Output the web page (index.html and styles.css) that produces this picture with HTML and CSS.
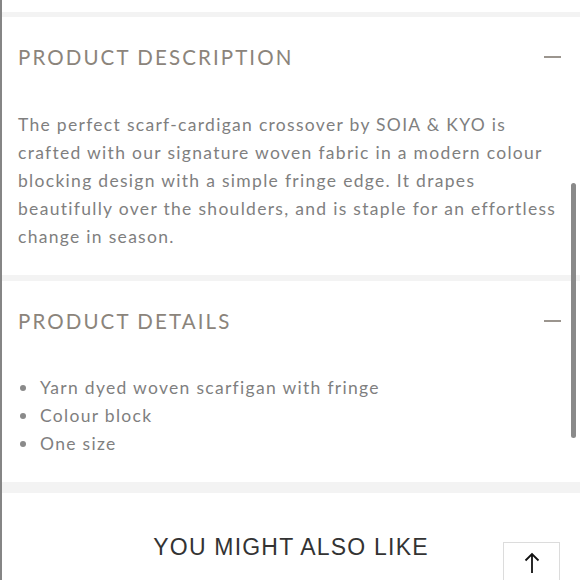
FILE: index.html
```html
<!DOCTYPE html>
<html lang="en">
<head>
<meta charset="utf-8">
<title>Product</title>
<link rel="stylesheet" href="styles.css">
</head>
<body>
<div class="page">
  <div class="band band-thin"></div>
  <section class="acc">
    <div class="acc-head">
      <h2 class="acc-title">PRODUCT DESCRIPTION</h2>
      <span class="minus"></span>
    </div>
    <p class="acc-body">The perfect scarf-cardigan crossover by SOIA &amp; KYO is crafted with our signature woven fabric in a modern colour blocking design with a simple fringe edge. It drapes beautifully over the shoulders, and is staple for an effortless change in season.</p>
  </section>
  <div class="band band-mid"></div>
  <section class="acc">
    <div class="acc-head">
      <h2 class="acc-title">PRODUCT DETAILS</h2>
      <span class="minus"></span>
    </div>
    <ul class="acc-list">
      <li>Yarn dyed woven scarfigan with fringe</li>
      <li>Colour block</li>
      <li>One size</li>
    </ul>
  </section>
  <div class="band band-thick"></div>
  <h3 class="also">YOU MIGHT ALSO LIKE</h3>
  <div class="scrollbar"></div>
  <button class="to-top" aria-label="Back to top">
    <svg width="16" height="22" viewBox="0 0 16 22"><path d="M8 21V2M1.5 8.5L8 2l6.5 6.5" fill="none" stroke="#111" stroke-width="1.8"/></svg>
  </button>
</div>
</body>
</html>
```
FILE: styles.css
```css
html, body {
  margin: 0;
  padding: 0;
  background: #fff;
}
body {
  height: 580px;
  overflow: hidden;
}
.page {
  position: relative;
  height: 580px;
  padding-top: 12px;
  border-left: 2px solid #858585;
  box-sizing: border-box;
  font-family: "Lato", "Liberation Sans", sans-serif;
}
.band {
  background: #f3f3f3;
}
.band-thin {
  height: 5px;
}
.band-mid {
  height: 6px;
}
.band-thick {
  height: 11px;
}
.acc {
  padding: 28px 20px 24px 16px;
}
.acc-head {
  display: flex;
  align-items: center;
  justify-content: space-between;
  height: 24px;
}
.acc-title {
  margin: 0;
  font-size: 20.5px;
  font-weight: 400;
  line-height: 24px;
  letter-spacing: 2.1px;
  color: #8b847b;
}
.minus {
  width: 17px;
  height: 2px;
  background: #9b958e;
  margin-right: -1px;
  margin-top: -1px;
}
.acc-body {
  margin: 42px 0 0 0;
  font-size: 17.5px;
  line-height: 28px;
  letter-spacing: 1.3px;
  color: #7f7f7f;
}
.acc-list {
  margin: 41px 0 0 0;
  padding: 0;
  list-style: none;
  font-size: 17.5px;
  line-height: 28px;
  letter-spacing: 1.3px;
  color: #7f7f7f;
}
.acc-list li {
  display: flex;
  align-items: center;
  gap: 14px;
  padding-left: 2px;
}
.acc-list li::before {
  content: "";
  width: 6px;
  height: 6px;
  border-radius: 50%;
  background: #8a8a8a;
  flex: none;
}
.also {
  margin: 41px 0 0 0;
  text-align: center;
  font-family: "Liberation Sans", Arial, sans-serif;
  font-size: 23px;
  font-weight: 400;
  line-height: 26px;
  letter-spacing: 1.2px;
  color: #333;
}
.scrollbar {
  position: absolute;
  left: 569px;
  top: 183px;
  width: 5px;
  height: 255px;
  border-radius: 3px;
  background: #8a8a8a;
}
.to-top {
  position: absolute;
  left: 501px;
  top: 542px;
  width: 57px;
  height: 52px;
  margin: 0;
  padding: 9px 0 0 0;
  display: flex;
  justify-content: center;
  align-items: flex-start;
  background: #fff;
  border: 1px solid #dcdcdc;
  box-sizing: border-box;
}
```
